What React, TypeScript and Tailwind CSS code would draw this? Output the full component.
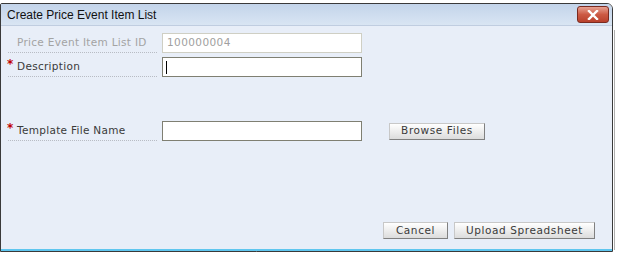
import React from "react";

const labelFont = { fontFamily: '"DejaVu Sans", Verdana, sans-serif' };

function Label({ text, required, muted }: { text: string; required?: boolean; muted?: boolean }) {
  return (
    <div className="relative w-[149px] h-[20px] flex items-center border-b border-dotted border-[#b8bcc4]">
      {required && (
        <span className="absolute left-[-1px] top-[1px] text-[#c00000] text-[12px] font-bold leading-none" style={labelFont}>*</span>
      )}
      <span
        className={`pl-[9px] text-[10.5px] tracking-[0.3px] ${muted ? "text-[#a3a3a3]" : "text-[#3a3a3a]"}`}
        style={labelFont}
      >
        {text}
      </span>
    </div>
  );
}

function Btn({ text, w }: { text: string; w: string }) {
  return (
    <div
      className={`${w} h-[17px] flex items-center justify-center border border-t-[#c8c8c8] border-l-[#c8c8c8] border-r-[#808080] border-b-[#808080] bg-gradient-to-b from-[#ffffff] to-[#dcdcdc] text-[10.5px] tracking-[0.6px] text-[#3a3a3a]`}
      style={labelFont}
    >
      {text}
    </div>
  );
}

export default function App() {
  return (
    <div className="w-[617px] h-[255px] bg-white relative overflow-hidden">
      <div className="absolute right-[2px] top-[30px] w-px h-[220px] bg-[#b0b0b0]" />
      <div className="w-[613px] h-[252px] pt-[3px]">
        <div className="w-full h-full flex flex-col border border-[#3a3a3a] rounded-tr-[6px] rounded-tl-[2px] overflow-hidden">
          <div className="h-[22px] flex items-center justify-between bg-gradient-to-b from-[#c3d4ea] to-[#d9e5f3] border-b border-[#c0cde0] pl-[6px] pr-[3px]">
            <span className="text-[12px] text-[#111111]" style={{ fontFamily: '"Liberation Sans", Arial, sans-serif' }}>
              Create Price Event Item List
            </span>
            <div className="w-[32px] h-[17px] rounded-[3px] border border-[#7a2a20] bg-gradient-to-b from-[#e6a192] via-[#cc5a44] to-[#b8402c] flex items-center justify-center">
              <svg width="12" height="10" viewBox="0 0 12 10">
                <path d="M2 1 L10 9 M10 1 L2 9" stroke="#ffffff" strokeWidth="2.4" strokeLinecap="square" />
              </svg>
            </div>
          </div>
          <div className="flex-1 flex flex-col bg-[#e8eef8] border-b-2 border-b-[#5fc6ef] pl-[7px] pr-[17px]">
            <div className="mt-[7px] flex items-center gap-[5px]">
              <Label text="Price Event Item List ID" muted />
              <div className="w-[200px] h-[20px] bg-white border border-[#cfcfc4] flex items-center pl-[4px] text-[10.5px] tracking-[0.4px] text-[#a0a0a0]" style={labelFont}>
                100000004
              </div>
            </div>
            <div className="mt-[4px] flex items-center gap-[5px]">
              <Label text="Description" required />
              <div className="w-[200px] h-[20px] bg-white border border-[#7f7f72] flex items-center pl-[3px]">
                <div className="w-px h-[13px] bg-black" />
              </div>
            </div>
            <div className="mt-[44px] flex items-center gap-[5px]">
              <Label text="Template File Name" required />
              <div className="w-[200px] h-[20px] bg-white border border-[#7f7f72]" />
              <div className="ml-[22px]">
                <Btn text="Browse Files" w="w-[96px]" />
              </div>
            </div>
            <div className="flex-1" />
            <div className="flex justify-end gap-[6px] mb-[10px]">
              <Btn text="Cancel" w="w-[65px]" />
              <Btn text="Upload Spreadsheet" w="w-[141px]" />
            </div>
          </div>
        </div>
      </div>
    </div>
  );
}
